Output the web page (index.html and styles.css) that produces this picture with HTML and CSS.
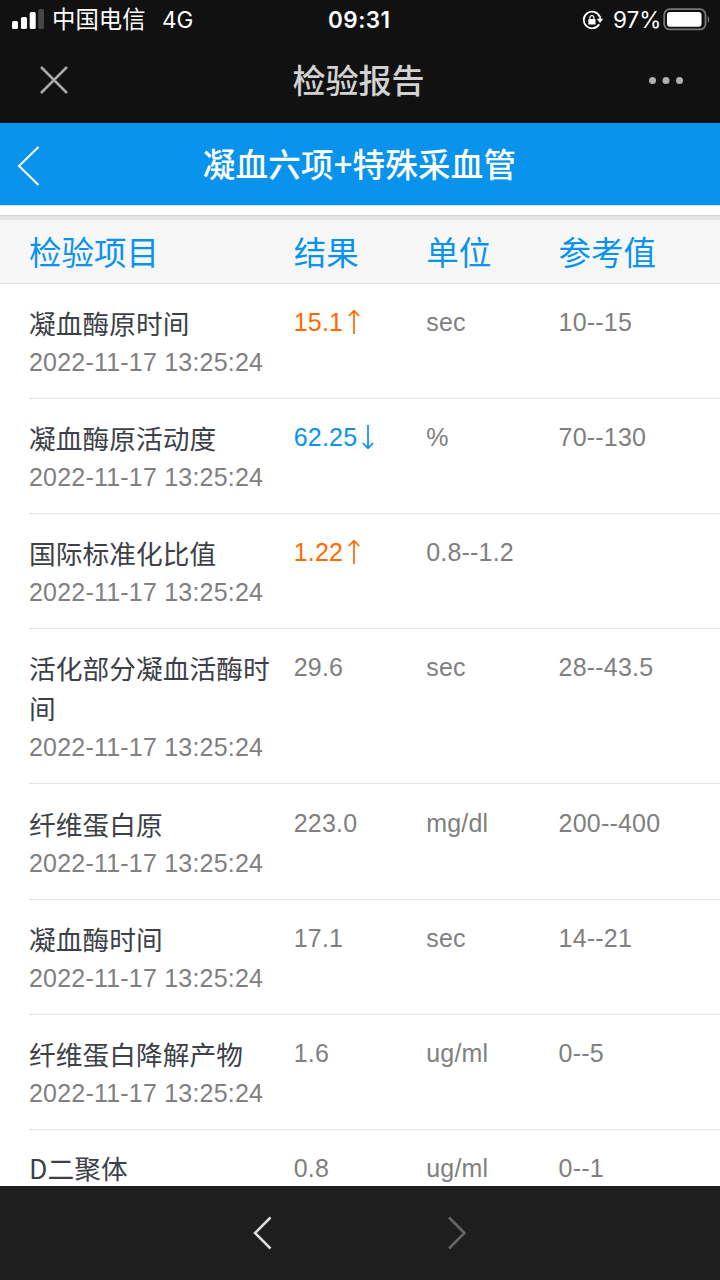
FILE: index.html
```html
<!DOCTYPE html>
<html lang="zh-CN">
<head>
<meta charset="utf-8">
<title>检验报告</title>
<link rel="stylesheet" href="styles.css">
</head>
<body>
<div class="screen">
  <div class="status">
    <svg class="signal" width="34" height="22" viewBox="0 0 34 22"><rect x="0" y="13" width="6" height="8" rx="1.6" fill="#fff"/><rect x="9" y="9" width="6" height="12" rx="1.6" fill="#fff"/><rect x="17.700" y="4" width="6" height="17" rx="1.600" fill="#fff"/><rect x="26.300" y="1" width="5.700" height="20" rx="1.600" fill="#464646"/></svg>
    <span class="carrier">中国电信</span>
    <span class="network">4G</span>
    <span class="clock">09:31</span>
    <svg class="lock" width="22" height="20" viewBox="0 0 22 20"><path d="M17.600 6.500A8.300 8.300 0 1 0 17.200 14.200" fill="none" stroke="#fff" stroke-width="1.800"/><path d="M14.800 8.800h6.400l-3.200 4.200z" fill="#fff"/><path d="M18 6v4" stroke="#fff" stroke-width="1.600"/><rect x="6.300" y="9" width="7.200" height="5.500" rx=".7" fill="#fff"/><path d="M7.900 9.500V7.700a2 2 0 0 1 4 0v1.800" fill="none" stroke="#fff" stroke-width="1.200"/></svg>
    <span class="percent">97%</span>
    <svg class="battery" width="48" height="24" viewBox="0 0 48 24"><rect x="1.200" y="1.200" width="41.300" height="20.200" rx="5.500" fill="none" stroke="#777" stroke-width="1.800"/><rect x="4" y="4" width="34.500" height="14.800" rx="3" fill="#fff"/><path d="M44.700 8.200c2 .8 2 5.600 0 6.400z" fill="#777"/></svg>
  </div>
  <div class="navbar">
    <svg class="close" width="30" height="30" viewBox="0 0 30 30"><path d="M2 2L28 28M28 2L2 28" fill="none" stroke="#aaa" stroke-width="2.500"/></svg>
    <h1 class="nav-title">检验报告</h1>
    <svg class="more" width="36" height="8" viewBox="0 0 36 8"><g fill="#b0b0b0"><circle cx="4.500" cy="4.500" r="3.500"/><circle cx="18" cy="4.500" r="3.500"/><circle cx="31.500" cy="4.500" r="3.500"/></g></svg>
  </div>
  <div class="subject">
    <svg class="back" width="24" height="42" viewBox="0 0 24 42"><path d="M21.500 2L2 21L21.500 40" fill="none" stroke="#fff" stroke-width="2"/></svg>
    <h2 class="subject-title">凝血六项+特殊采血管</h2>
  </div>
  <div class="spacer"></div>
  <div class="columns head"><span>检验项目</span><span>结果</span><span>单位</span><span>参考值</span></div>
  <div class="rows">
    <div class="columns row"><div><p class="name">凝血酶原时间</p><p class="date">2022-11-17 13:25:24</p></div><span class="high">15.1<svg class="arrow" width="14" height="26" viewBox="0 0 14 26"><path d="M7 25V2M1.800 7L7 1.800L12.200 7"/></svg></span><span>sec</span><span>10--15</span></div>
    <div class="columns row"><div><p class="name">凝血酶原活动度</p><p class="date">2022-11-17 13:25:24</p></div><span class="low">62.25<svg class="arrow" width="14" height="26" viewBox="0 0 14 26"><path d="M7 1V24M1.800 19L7 24.200L12.200 19"/></svg></span><span>%</span><span>70--130</span></div>
    <div class="columns row"><div><p class="name">国际标准化比值</p><p class="date">2022-11-17 13:25:24</p></div><span class="high">1.22<svg class="arrow" width="14" height="26" viewBox="0 0 14 26"><path d="M7 25V2M1.800 7L7 1.800L12.200 7"/></svg></span><span>0.8--1.2</span><span></span></div>
    <div class="columns row"><div><p class="name">活化部分凝血活酶时间</p><p class="date">2022-11-17 13:25:24</p></div><span>29.6</span><span>sec</span><span>28--43.5</span></div>
    <div class="columns row"><div><p class="name">纤维蛋白原</p><p class="date">2022-11-17 13:25:24</p></div><span>223.0</span><span>mg/dl</span><span>200--400</span></div>
    <div class="columns row"><div><p class="name">凝血酶时间</p><p class="date">2022-11-17 13:25:24</p></div><span>17.1</span><span>sec</span><span>14--21</span></div>
    <div class="columns row"><div><p class="name">纤维蛋白降解产物</p><p class="date">2022-11-17 13:25:24</p></div><span>1.6</span><span>ug/ml</span><span>0--5</span></div>
    <div class="columns row last"><div><p class="name">D二聚体</p></div><span>0.8</span><span>ug/ml</span><span>0--1</span></div>
  </div>
  <div class="toolbar">
    <svg width="20" height="34" viewBox="0 0 20 34"><path d="M17.500 1.500L2 17L17.500 32.500" fill="none" stroke="#ddd" stroke-width="2.500"/></svg>
    <svg width="20" height="34" viewBox="0 0 20 34"><path d="M2 1.500L17.500 17L2 32.500" fill="none" stroke="#666" stroke-width="2.500"/></svg>
  </div>
</div>
</body>
</html>
```
FILE: styles.css
```css
* { box-sizing: border-box; }
body { margin: 0; background: #fff; }
p, h1, h2 { margin: 0; }
svg { display: block; flex: none; }
.screen {
  width: 720px;
  height: 1280px;
  display: flex;
  flex-direction: column;
  overflow: hidden;
  font-family: "Liberation Sans", "Noto Sans CJK SC", sans-serif;
}
.status {
  height: 40px;
  flex: none;
  display: flex;
  align-items: center;
  background: #111;
  color: #fff;
  padding-left: 12px;
  font-family: Inter, "Noto Sans CJK SC", sans-serif;
  font-size: 22.500px;
  line-height: 40px;
  white-space: nowrap;
}
.signal { margin-top: -2px; }
.carrier { width: 110px; margin-top: -4px; padding-left: 6px; font-size: 23.400px; font-family: "Noto Sans CJK SC", sans-serif; }
.network { width: 172px; padding-left: 6px; }
.clock { width: 254px; font-weight: 600; letter-spacing: .45px; }
.lock { margin-right: 9px; }
.percent { width: 50px; }
.battery { margin-top: -1px; }
.navbar {
  height: 83px;
  flex: none;
  display: grid;
  grid-template-columns: 1fr auto 1fr;
  align-items: center;
  padding: 0 36px 3px 39px;
  background: #111;
}
.nav-title {
  margin: -2px 6px 0 0;
  color: #d2d2d2;
  font: 500 33px/48px "Noto Sans CJK SC", sans-serif;
}
.more { justify-self: end; }
.subject {
  height: 82px;
  flex: none;
  display: grid;
  grid-template-columns: 1fr auto 1fr;
  align-items: center;
  padding: 0 18px 0 17px;
  background: #0a93ed;
}
.back { margin-top: 3px; }
.subject-title {
  margin-top: -2px;
  color: #fff;
  font: 500 32.500px/48px "Noto Sans CJK SC", sans-serif;
  letter-spacing: .250px;
}
.spacer {
  height: 15px;
  flex: none;
  border-top: 1px solid #d5e3ee;
  border-bottom: 4px solid #e5e5e5;
  box-shadow: inset 0 -1px #d6d6d6;
}
.columns {
  display: grid;
  grid-template-columns: 264.700px 132.500px 132.400px 1fr;
}
.head {
  height: 64px;
  flex: none;
  padding-left: 29px;
  background: #f7f7f7;
  border-bottom: 1px solid #dcdcdc;
  color: #0a93ed;
  font: 32.500px/62px "Noto Sans CJK SC", sans-serif;
}
.rows { flex: 1; min-height: 0; overflow: hidden; }
.row {
  margin-left: 29px;
  padding: 20px 0 18px;
  border-bottom: 1px solid #e2e2e2;
  margin-bottom: .160px;
  color: #808080;
  font-size: 25px;
  line-height: 36px;
  letter-spacing: .200px;
}
.name {
  width: 250px;
  margin-top: -1px;
  padding-bottom: 1px;
  color: #3d4147;
  font: 26.700px/40px "Noto Sans CJK SC", sans-serif;
  letter-spacing: .050px;
}
.last { padding-bottom: 0; margin-bottom: 0; border-bottom: 0; }
.last .name { margin-top: 2px; padding-bottom: 0; line-height: 32px; }
.high { color: #ff6a00; }
.low { color: #0a93ed; }
.high, .low { display: flex; align-items: center; height: 36px; }
.arrow { margin: -1px 0 0 4px; fill: none; stroke: currentColor; stroke-width: 1.700px; }
.toolbar {
  height: 94px;
  flex: none;
  display: flex;
  justify-content: center;
  align-items: center;
  gap: 174px;
  background: #1e1e1e;
}
```
